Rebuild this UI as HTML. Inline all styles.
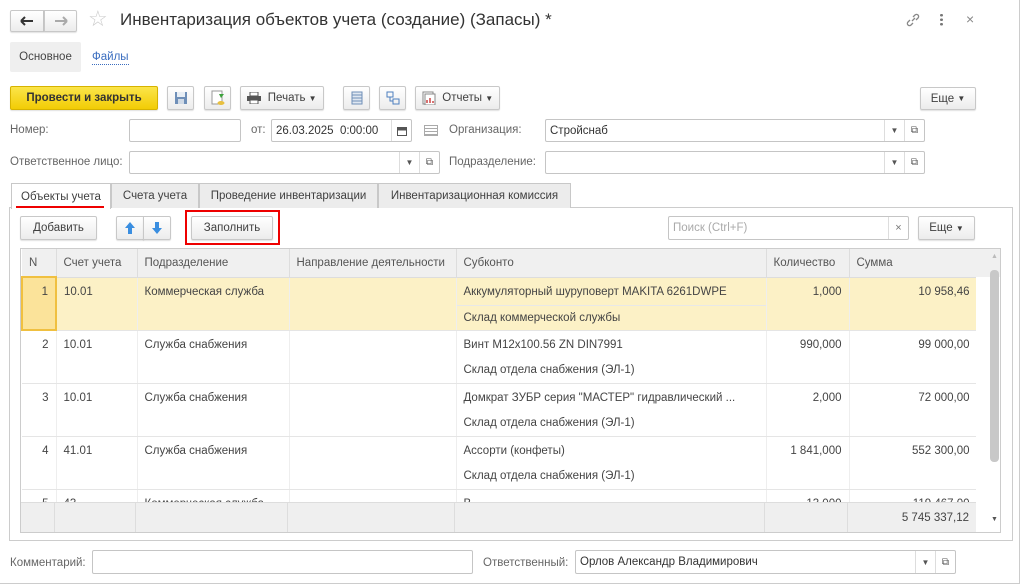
<!DOCTYPE html>
<html><head><meta charset="utf-8"><style>
*{box-sizing:border-box;margin:0;padding:0}
body{width:1024px;height:586px;overflow:hidden;background:#fff;font-family:"Liberation Sans",Arial,sans-serif;font-size:11.5px;color:#404040;position:relative}
.a{position:absolute}
.btn{position:absolute;border:1px solid #c8c8c8;border-radius:2px;background:linear-gradient(#fff,#ececec);box-shadow:0 1px 1px rgba(0,0,0,.12);display:flex;align-items:center;justify-content:center;color:#404040;white-space:nowrap}
.inp{position:absolute;border:1px solid #c5c5c5;border-radius:2px;background:#fff;display:flex;align-items:center;padding-left:4px;color:#333}
.sb{position:absolute;top:0;bottom:0;width:20px;border-left:1px solid #ddd;display:flex;align-items:center;justify-content:center;font-size:8px;color:#555}
.lbl{position:absolute;color:#666;white-space:nowrap}
.tab{position:absolute;top:183px;height:25px;border:1px solid #c8c8c8;background:#ececec;display:flex;align-items:center;justify-content:center;color:#404040;border-bottom:none;white-space:nowrap}
table{border-collapse:collapse;position:absolute;left:21px;top:249px;width:955px;table-layout:fixed}
td{vertical-align:top;padding:8px 7px 0;height:53px;border-right:1px solid #eee;border-bottom:1px solid #e5e5e5;color:#444;white-space:nowrap;overflow:hidden}
th{height:28px;background:#f0f0f0;font-weight:normal;text-align:left;padding:0 7px;color:#555;border-right:1px solid #ddd;border-bottom:1px solid #ddd;white-space:nowrap;overflow:hidden}
.r{text-align:right}
.sub{border-top:1px solid #e8e8e8;margin:7px -7px 0;padding:6px 7px 0}
</style></head><body>
<div class="a" style="left:0;top:0;width:1020px;height:584px;border-right:1px solid #ccc;border-bottom:1px solid #ccc"></div>
<div class="btn" style="left:10px;top:10px;width:34px;height:22px;border-radius:2px 0 0 2px"><svg width="14" height="10"><path d="M1 5h12M1 5l4-4M1 5l4 4" stroke="#333" stroke-width="2" fill="none"/></svg></div>
<div class="btn" style="left:44px;top:10px;width:33px;height:22px;border-radius:0 2px 2px 0"><svg width="14" height="10"><path d="M1 5h12M13 5l-4-4M13 5l-4 4" stroke="#aaa" stroke-width="2" fill="none"/></svg></div>
<div class="a" style="left:88px;top:6px;font-size:22px;color:#ccc">☆</div>
<div class="a" style="left:120px;top:10px;font-size:17px;color:#333">Инвентаризация объектов учета (создание) (Запасы) *</div>
<svg class="a" style="left:905px;top:12px" width="16" height="16" viewBox="0 0 16 16" fill="none" stroke="#888" stroke-width="1.3"><path d="M7 9l3-3M5 8l-2 2a2 2 0 003 3l2-2M11 8l2-2a2 2 0 00-3-3L8 5"/></svg>
<div class="a" style="left:940px;top:13px;width:3px;height:13px;background:radial-gradient(circle,#777 1.3px,transparent 1.5px) 0 0/3px 4.5px"></div>
<div class="a" style="left:966px;top:11px;font-size:14px;color:#888">×</div>
<div class="a" style="left:10px;top:42px;width:71px;height:30px;background:#efefef;border-radius:2px;display:flex;align-items:center;justify-content:center;color:#444">Основное</div>
<div class="a" style="left:92px;top:51px;color:#3a6dbf;border-bottom:1px dotted #3a6dbf;line-height:13px">Файлы</div>
<div class="btn" style="left:10px;top:86px;width:148px;height:24px;background:linear-gradient(#fbe54a,#f2cc05);border-color:#d6b300;font-weight:bold;color:#333">Провести и закрыть</div>
<div class="btn" style="left:167px;top:86px;width:27px;height:24px"><svg width="14" height="14"><rect x="1" y="1" width="12" height="12" fill="#6f8fb8"/><rect x="3" y="1" width="8" height="5" fill="#e8eef5"/><rect x="4" y="8" width="6" height="5" fill="#d0dae6"/></svg></div>
<div class="btn" style="left:204px;top:86px;width:27px;height:24px"><svg width="16" height="16"><rect x="2" y="1" width="10" height="13" fill="#fff" stroke="#999"/><path d="M9 4h5l-3 4z" fill="#3ba13b"/><ellipse cx="11" cy="13" rx="3.5" ry="2" fill="#e8c040"/></svg></div>
<div class="btn" style="left:240px;top:86px;width:84px;height:24px"><svg width="14" height="12"><rect x="3" y="0" width="8" height="4" fill="#fff" stroke="#555"/><rect x="0" y="4" width="14" height="5" fill="#555"/><rect x="3" y="8" width="8" height="4" fill="#fff" stroke="#555"/></svg>&nbsp; Печать&nbsp; <span style="font-size:8px">▼</span></div>
<div class="btn" style="left:343px;top:86px;width:27px;height:24px"><svg width="12" height="14"><rect x="1" y="1" width="10" height="12" fill="#dfe7f1" stroke="#6f8fb8"/><path d="M1 4h10M1 7h10M1 10h10" stroke="#6f8fb8"/></svg></div>
<div class="btn" style="left:379px;top:86px;width:27px;height:24px"><svg width="14" height="14" fill="none" stroke="#4d7fbf"><rect x="1" y="1" width="6" height="5"/><rect x="7" y="8" width="6" height="5"/><path d="M4 6v4h3"/></svg></div>
<div class="btn" style="left:415px;top:86px;width:85px;height:24px"><svg width="14" height="14"><rect x="1" y="1" width="10" height="12" fill="#fff" stroke="#888"/><rect x="3" y="3" width="10" height="11" fill="#fff" stroke="#888"/><path d="M5 12V9M8 12V7M11 12V10" stroke="#c44" stroke-width="1.5"/></svg>&nbsp; Отчеты&nbsp; <span style="font-size:8px">▼</span></div>
<div class="btn" style="left:920px;top:87px;width:56px;height:23px">Еще&nbsp; <span style="font-size:8px">▼</span></div>

<div class="lbl" style="left:10px;top:124px">Номер:</div>
<div class="inp" style="left:129px;top:119px;width:112px;height:23px"></div>
<div class="lbl" style="left:251px;top:124px">от:</div>
<div class="inp" style="left:271px;top:119px;width:141px;height:23px">26.03.2025&nbsp; 0:00:00<div class="sb" style="right:0"><svg width="10" height="10"><rect x="0.5" y="1.5" width="9" height="8" fill="none" stroke="#555"/><rect x="0.5" y="1.5" width="9" height="3" fill="#555"/></svg></div></div>
<div class="a" style="left:424px;top:125px;width:14px;height:11px;border:1px solid #aaa;background:repeating-linear-gradient(#fff 0 2px,#aaa 2px 3px)"></div>
<div class="lbl" style="left:449px;top:124px">Организация:</div>
<div class="inp" style="left:545px;top:119px;width:380px;height:23px">Стройснаб<div class="sb" style="right:20px">▼</div><div class="sb" style="right:0;font-size:10px">⧉</div></div>
<div class="lbl" style="left:10px;top:156px">Ответственное лицо:</div>
<div class="inp" style="left:129px;top:151px;width:311px;height:23px"><div class="sb" style="right:20px">▼</div><div class="sb" style="right:0;font-size:10px">⧉</div></div>
<div class="lbl" style="left:449px;top:156px">Подразделение:</div>
<div class="inp" style="left:545px;top:151px;width:380px;height:23px"><div class="sb" style="right:20px">▼</div><div class="sb" style="right:0;font-size:10px">⧉</div></div>

<div class="a" style="left:9px;top:207px;width:1004px;height:334px;border:1px solid #ccc"></div>
<div class="tab" style="left:11px;width:100px;background:#fff;height:26px">Объекты учета</div>
<div class="a" style="left:16px;top:206px;width:88px;height:2px;background:#e00"></div>
<div class="tab" style="left:111px;width:88px">Счета учета</div>
<div class="tab" style="left:199px;width:179px">Проведение инвентаризации</div>
<div class="tab" style="left:378px;width:193px">Инвентаризационная комиссия</div>

<div class="btn" style="left:20px;top:216px;width:77px;height:24px">Добавить</div>
<div class="btn" style="left:116px;top:216px;width:28px;height:24px;border-radius:2px 0 0 2px"><svg width="10" height="12"><path d="M5 0L0 6h3v6h4V6h3z" fill="#3a8ee0"/></svg></div>
<div class="btn" style="left:143px;top:216px;width:28px;height:24px;border-radius:0 2px 2px 0"><svg width="10" height="12"><path d="M5 12L0 6h3V0h4v6h3z" fill="#3a8ee0"/></svg></div>
<div class="a" style="left:185px;top:210px;width:95px;height:35px;border:2px solid #e00"></div>
<div class="btn" style="left:191px;top:216px;width:82px;height:24px">Заполнить</div>
<div class="inp" style="left:668px;top:216px;width:241px;height:24px;color:#aaa">Поиск (Ctrl+F)<div class="sb" style="right:0;font-size:11px;color:#777">×</div></div>
<div class="btn" style="left:918px;top:216px;width:57px;height:24px">Еще&nbsp; <span style="font-size:8px">▼</span></div>

<div class="a" style="left:20px;top:248px;width:981px;height:285px;border:1px solid #ccc"></div>
<div class="a" style="left:976px;top:249px;width:24px;height:28px;background:#f0f0f0"></div>
<div class="a" style="left:990px;top:270px;width:9px;height:192px;background:#c8c8c8;border-radius:4px"></div>
<div class="a" style="left:991px;top:253px;font-size:7px;color:#bbb">▲</div>
<div class="a" style="left:991px;top:516px;font-size:7px;color:#555">▼</div>
<div class="a" style="left:21px;top:249px;width:955px;height:283px;overflow:hidden">
<table style="left:0;top:0">
<colgroup><col style="width:34px"><col style="width:81px"><col style="width:152px"><col style="width:167px"><col style="width:310px"><col style="width:83px"><col style="width:128px"></colgroup>
<tr><th>N</th><th>Счет учета</th><th>Подразделение</th><th>Направление деятельности</th><th>Субконто</th><th>Количество</th><th>Сумма</th></tr>
<tr style="background:#fcf1c6"><td class="r" style="background:#fbe39a;border:2px solid #f0c040">1</td><td>10.01</td><td>Коммерческая служба</td><td></td><td>Аккумуляторный шуруповерт MAKITA 6261DWPE<div class="sub">Склад коммерческой службы</div></td><td class="r">1,000</td><td class="r">10 958,46</td></tr>
<tr><td class="r">2</td><td>10.01</td><td>Служба снабжения</td><td></td><td>Винт М12х100.56 ZN DIN7991<div class="sub" style="border:0">Склад отдела снабжения (ЭЛ-1)</div></td><td class="r">990,000</td><td class="r">99 000,00</td></tr>
<tr><td class="r">3</td><td>10.01</td><td>Служба снабжения</td><td></td><td>Домкрат ЗУБР серия "МАСТЕР" гидравлический ...<div class="sub" style="border:0">Склад отдела снабжения (ЭЛ-1)</div></td><td class="r">2,000</td><td class="r">72 000,00</td></tr>
<tr><td class="r">4</td><td>41.01</td><td>Служба снабжения</td><td></td><td>Ассорти (конфеты)<div class="sub" style="border:0">Склад отдела снабжения (ЭЛ-1)</div></td><td class="r">1 841,000</td><td class="r">552 300,00</td></tr>
<tr><td class="r">5</td><td>43</td><td>Коммерческая служба</td><td></td><td>В</td><td class="r">13,000</td><td class="r">119 467,00</td></tr>
</table>
<div class="a" style="left:0;top:253px;width:955px;height:30px;background:#efefef;border-top:1px solid #ddd;display:flex">
<div style="width:34px;border-right:1px solid #ddd"></div><div style="width:81px;border-right:1px solid #ddd"></div><div style="width:152px;border-right:1px solid #ddd"></div><div style="width:167px;border-right:1px solid #ddd"></div><div style="width:310px;border-right:1px solid #ddd"></div><div style="width:83px;border-right:1px solid #ddd"></div><div style="width:128px;text-align:right;padding:9px 7px 0;color:#444">5 745 337,12</div></div>
</div>

<div class="lbl" style="left:10px;top:557px">Комментарий:</div>
<div class="inp" style="left:92px;top:550px;width:381px;height:24px"></div>
<div class="lbl" style="left:483px;top:557px">Ответственный:</div>
<div class="inp" style="left:575px;top:550px;width:381px;height:24px">Орлов Александр Владимирович<div class="sb" style="right:20px">▼</div><div class="sb" style="right:0;font-size:10px">⧉</div></div>
</body></html>
